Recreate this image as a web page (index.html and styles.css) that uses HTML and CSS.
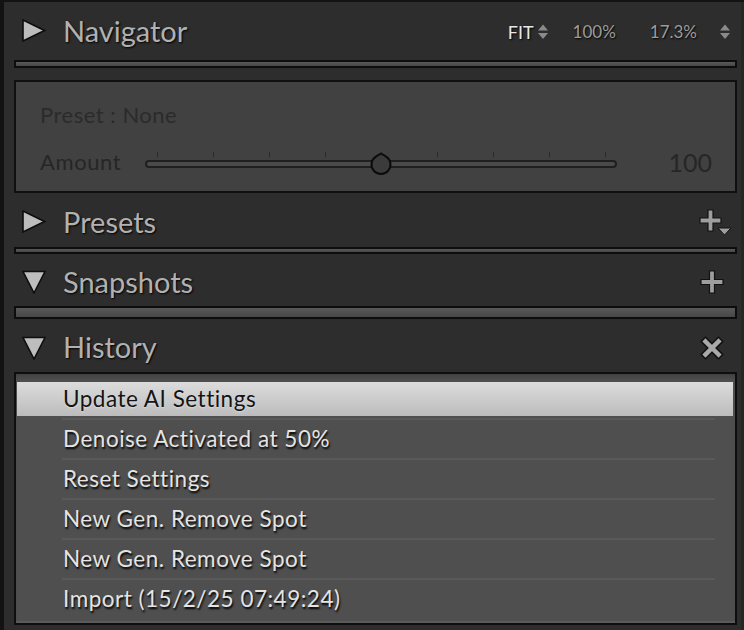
FILE: index.html
```html
<!DOCTYPE html>
<html lang="en">
<head>
<meta charset="utf-8">
<title>Develop panels</title>
<link rel="stylesheet" href="styles.css">
</head>
<body>
<div class="app">
  <div class="hdr hdr-nav">
    <svg class="tri" width="24" height="24" viewBox="0 0 24 24"><polygon points="1,1 22.5,11.5 1,22" /></svg>
    <span class="title">Navigator</span>
    <div class="zoom">
      <span class="fit">FIT</span>
      <svg class="updown" width="10" height="16" viewBox="0 0 10 16"><polygon points="0,6.5 5,0.5 10,6.5"/><polygon points="0,9 10,9 5,15"/></svg>
      <span class="pct pct1">100%</span>
      <span class="pct pct2">17.3%</span>
      <svg class="updown updown2" width="10" height="16" viewBox="0 0 10 16"><polygon points="0,6.5 5,0.5 10,6.5"/><polygon points="0,9 10,9 5,15"/></svg>
    </div>
  </div>
  <div class="rule rule-nav"></div>

  <div class="preset-box">
    <div class="preset-name">Preset : None</div>
    <div class="amount-row">
      <span class="amount-label">Amount</span>
      <div class="slider">
        <div class="ticks"><i></i><i></i><i></i><i></i><i></i><i></i><i></i><i></i><i></i></div>
        <div class="track"></div>
        <svg class="knob" width="24" height="24" viewBox="0 0 24 24"><path d="M12 1.5 L16.8 4.3 A9.5 9.5 0 1 1 7.2 4.3 Z" /></svg>
      </div>
      <span class="amount-val">100</span>
    </div>
  </div>

  <div class="hdr hdr-presets">
    <svg class="tri" width="24" height="24" viewBox="0 0 24 24"><polygon points="1,1 22.5,11.5 1,22" /></svg>
    <span class="title">Presets</span>
    <svg class="hicon plus-menu" width="34" height="28" viewBox="0 0 34 28"><path class="plus" d="M9 1 H14 V9 H22 V14 H14 V22 H9 V14 H1 V9 H9 Z"/><polygon class="mini" points="19,19 32,19 25.5,26"/></svg>
  </div>
  <div class="rule rule-presets"></div>

  <div class="hdr hdr-snap">
    <svg class="tri" width="24" height="24" viewBox="0 0 24 24"><polygon points="1,1.5 23,1.5 12,23" /></svg>
    <span class="title">Snapshots</span>
    <svg class="hicon plus-only" width="24" height="24" viewBox="0 0 24 24"><path class="plus" d="M9.5 1 H14.5 V9.5 H23 V14.5 H14.5 V23 H9.5 V14.5 H1 V9.5 H9.5 Z"/></svg>
  </div>
  <div class="rule rule-snap"></div>

  <div class="hdr hdr-hist">
    <svg class="tri" width="24" height="24" viewBox="0 0 24 24"><polygon points="1,1.5 23,1.5 12,23" /></svg>
    <span class="title">History</span>
    <svg class="hicon close" width="24" height="24" viewBox="0 0 24 24"><path class="x-out" d="M5.5 5.5 L18.5 18.5 M18.5 5.5 L5.5 18.5"/><path class="x-in" d="M5.5 5.5 L18.5 18.5 M18.5 5.5 L5.5 18.5"/></svg>
  </div>

  <ul class="history">
    <li class="row selected"><span class="label">Update AI Settings</span></li>
    <li class="row"><span class="label">Denoise Activated at 50%</span></li>
    <li class="row"><span class="label">Reset Settings</span></li>
    <li class="row"><span class="label">New Gen. Remove Spot</span></li>
    <li class="row"><span class="label">New Gen. Remove Spot</span></li>
    <li class="row last"><span class="label">Import (15/2/25 07:49:24)</span></li>
  </ul>
</div>
</body>
</html>
```

FILE: styles.css
```css
* { box-sizing: border-box; }
html, body {
  margin: 0;
  padding: 0;
  background: #2d2d2d;
}
body {
  width: 744px;
  height: 630px;
  overflow: hidden;
  font-family: Lato, "Open Sans", sans-serif;
}
.app {
  width: 744px;
  height: 630px;
  border-left: 4px solid #131313;
  border-top: 2px solid #131313;
  padding: 0 7px 0 10px;
  background: #2d2d2d;
  box-shadow: inset -3px 0 0 #262626;
}

/* headers */
.hdr {
  display: flex;
  align-items: center;
  padding-left: 8px;
}
.hdr-nav { height: 58px; }
.hdr-presets { height: 54px; padding-top: 4px; }
.hdr-snap { height: 52px; padding-top: 4px; }
.hdr-hist { height: 53px; padding-top: 4px; }

.tri { flex: none; }
.tri polygon {
  fill: #bdbdbd;
  stroke: #0e0e0e;
  stroke-width: 1.6;
  stroke-linejoin: miter;
}
.title {
  margin-left: 17px;
  font-size: 29px;
  color: #b1b1b1;
  text-shadow: 1px 1px 2px #000;
  line-height: 1.2;
}

.zoom {
  margin-left: auto;
  display: flex;
  align-items: center;
  padding-right: 7px;
  padding-top: 1px;
}
.fit {
  font-size: 18px;
  color: #e8e8e8;
  text-shadow: 1px 1px 2px #000;
}
.updown { margin-left: 4px; }
.updown polygon { fill: #8a8a8a; }
.updown2 { margin-left: 23px; }
.pct {
  font-size: 17px;
  color: #9c9c9c;
  text-shadow: 1px 1px 2px #000;
}
.pct1 { margin-left: 25px; }
.pct2 { margin-left: 34px; }

.hicon { margin-left: auto; flex: none; }
.plus {
  fill: #9e9e9e;
  stroke: #121212;
  stroke-width: 1.2;
}
.mini { fill: #9e9e9e; stroke: #121212; stroke-width: 1; }
.plus-menu { margin-right: 4px; margin-top: 2px; }
.plus-only { margin-right: 13px; }
.close { margin-right: 13px; }
.x-out { stroke: #111; stroke-width: 7.5; stroke-linecap: square; fill: none; }
.x-in { stroke: #a9a9a9; stroke-width: 4.5; stroke-linecap: square; fill: none; }

/* rules */
.rule {
  border: 2px solid #0d0d0d;
  background: linear-gradient(#595959, #474747);
}
.rule-nav { height: 8px; }
.rule-presets { height: 7px; }
.rule-snap { height: 13px; }

/* preset box */
.preset-box {
  margin-top: 12px;
  height: 113px;
  border: 2px solid #101010;
  background: #414141;
  padding: 19px 23px 0 24px;
}
.preset-name {
  height: 28px;
  line-height: 28px;
  font-size: 22px;
  letter-spacing: 0.5px;
  color: #2b2b2b;
}
.amount-row {
  margin-top: 19px;
  height: 28px;
  display: flex;
  align-items: center;
}
.amount-label {
  width: 105px;
  flex: none;
  font-size: 22px;
  letter-spacing: 0.6px;
  color: #262626;
  line-height: 28px;
}
.slider {
  position: relative;
  width: 472px;
  height: 28px;
  flex: none;
}
.ticks {
  display: flex;
  justify-content: space-between;
  width: 461px;
  padding-left: 12px;
  margin-top: 4px;
  height: 5px;
}
.ticks i {
  display: block;
  width: 1px;
  height: 5px;
  background: #2a2a2a;
}
.track {
  margin-top: 3px;
  height: 8px;
  border: 2px solid #1f1f1f;
  border-radius: 4px;
  background: #4a4a4a;
}
.knob {
  position: absolute;
  left: 224px;
  top: 4px;
}
.knob path {
  fill: #3b3b3b;
  stroke: #0b0b0b;
  stroke-width: 2;
  stroke-linejoin: round;
}
.amount-val {
  margin-left: auto;
  font-size: 25px;
  color: #262626;
  line-height: 28px;
}

/* history */
.history {
  list-style: none;
  margin: 0;
  height: 253px;
  border: 2px solid #0e0e0e;
  background: #4f4f4f;
  padding: 6px 2px 3px 1px;
  box-shadow: inset 0 7px 5px -4px #404040, inset 0 -2px 0 #5a5a5a;
}
.row {
  padding-top: 2px;
  height: 40px;
}
.row::after {
  content: "";
  display: block;
  height: 2px;
  margin: 2px 18px 0 45px;
  background: #595959;
}
.row.last::after { background: transparent; }
.label {
  display: block;
  height: 34px;
  line-height: 34px;
  padding-left: 46px;
  font-size: 22.5px;
  letter-spacing: 0.5px;
  color: #e4e4e4;
  text-shadow: 1px 2px 2px #000;
  white-space: nowrap;
}
.selected .label {
  background: linear-gradient(#dcdcdc, #bcbcbc);
  color: #141414;
  text-shadow: 0 1px 2px rgba(255,255,255,0.45);
}
```
